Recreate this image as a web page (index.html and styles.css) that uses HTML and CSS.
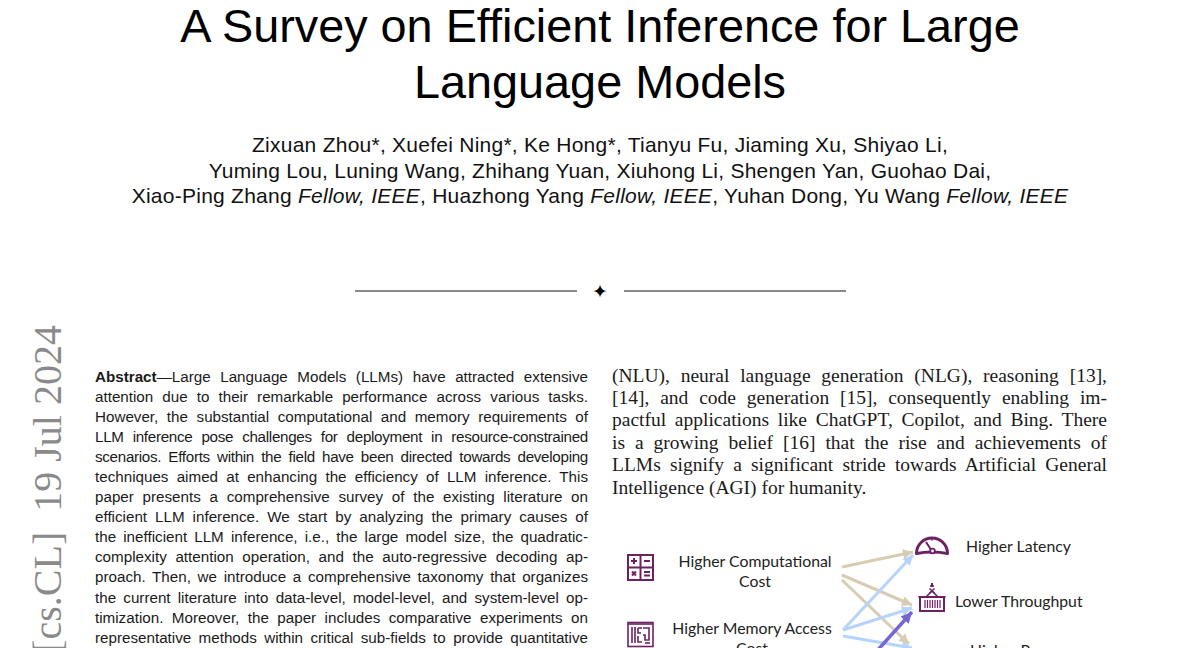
FILE: index.html
```html
<!DOCTYPE html>
<html lang="en">
<head>
<meta charset="utf-8">
<title>A Survey on Efficient Inference for Large Language Models</title>
<link rel="stylesheet" href="styles.css">
</head>
<body>
<div class="page">
  <div class="stamp">[cs.CL]&nbsp;&nbsp;19 Jul 2024</div>

  <h1 class="title">A Survey on Efficient Inference for Large<br>Language Models</h1>

  <p class="authors">Zixuan Zhou*, Xuefei Ning*, Ke Hong*, Tianyu Fu, Jiaming Xu, Shiyao Li,<br>Yuming Lou, Luning Wang, Zhihang Yuan, Xiuhong Li, Shengen Yan, Guohao Dai,<br>Xiao-Ping Zhang <i>Fellow, IEEE</i>, Huazhong Yang <i>Fellow, IEEE</i>, Yuhan Dong, Yu Wang <i>Fellow, IEEE</i></p>

  <div class="divider"><span class="rule"></span><span class="star">&#10022;</span><span class="rule"></span></div>

  <div class="columns">
    <div class="abstract">
      <span class="ln"><b>Abstract</b>—Large Language Models (LLMs) have attracted extensive</span>
      <span class="ln">attention due to their remarkable performance across various tasks.</span>
      <span class="ln">However, the substantial computational and memory requirements of</span>
      <span class="ln tight">LLM inference pose challenges for deployment in resource-constrained</span>
      <span class="ln tight">scenarios. Efforts within the field have been directed towards developing</span>
      <span class="ln">techniques aimed at enhancing the efficiency of LLM inference. This</span>
      <span class="ln">paper presents a comprehensive survey of the existing literature on</span>
      <span class="ln">efficient LLM inference. We start by analyzing the primary causes of</span>
      <span class="ln">the inefficient LLM inference, i.e., the large model size, the quadratic-</span>
      <span class="ln">complexity attention operation, and the auto-regressive decoding ap-</span>
      <span class="ln">proach. Then, we introduce a comprehensive taxonomy that organizes</span>
      <span class="ln">the current literature into data-level, model-level, and system-level op-</span>
      <span class="ln">timization. Moreover, the paper includes comparative experiments on</span>
      <span class="ln">representative methods within critical sub-fields to provide quantitative</span>
    </div>

    <div class="right">
      <div class="para">
        <span class="ln">(NLU), neural language generation (NLG), reasoning [13],</span>
        <span class="ln">[14], and code generation [15], consequently enabling im-</span>
        <span class="ln">pactful applications like ChatGPT, Copilot, and Bing. There</span>
        <span class="ln">is a growing belief [16] that the rise and achievements of</span>
        <span class="ln">LLMs signify a significant stride towards Artificial General</span>
        <span class="ln last">Intelligence (AGI) for humanity.</span>
      </div>

      <div class="figure">
        <svg class="arrows" width="495" height="200" viewBox="0 0 495 200">
          <defs>
            <marker id="mb" viewBox="0 0 10 10" refX="10" refY="5" markerWidth="11" markerHeight="10" markerUnits="userSpaceOnUse" orient="auto"><path d="M0 0 L10 5 L0 10 Z" fill="#d8cdb3"/></marker>
            <marker id="mc" viewBox="0 0 10 10" refX="10" refY="5" markerWidth="11" markerHeight="10" markerUnits="userSpaceOnUse" orient="auto"><path d="M0 0 L10 5 L0 10 Z" fill="#b6d4fb"/></marker>
            <marker id="mp" viewBox="0 0 10 10" refX="10" refY="5" markerWidth="12" markerHeight="11" markerUnits="userSpaceOnUse" orient="auto"><path d="M0 0 L10 5 L0 10 Z" fill="#7565d6"/></marker>
          </defs>
          <g stroke="#d8cdb3" stroke-width="3" fill="none" marker-end="url(#mb)">
            <line x1="230" y1="37" x2="301" y2="22"/>
            <line x1="230" y1="45" x2="300" y2="75"/>
            <line x1="230" y1="50" x2="297" y2="114"/>
          </g>
          <g stroke="#b6d4fb" stroke-width="3" fill="none" marker-end="url(#mc)">
            <line x1="231" y1="100" x2="301" y2="25"/>
            <line x1="231" y1="100" x2="300" y2="78"/>
            <line x1="231" y1="106" x2="300" y2="118"/>
          </g>
          <line x1="264" y1="122" x2="300" y2="82" stroke="#7565d6" stroke-width="3.5" marker-end="url(#mp)"/>
        </svg>

        <svg class="icon calc" width="27" height="27" viewBox="0 0 27 27">
          <g stroke="#6d2163" stroke-width="2" fill="none">
            <rect x="1" y="1" width="25" height="25"/>
            <line x1="13.5" y1="1" x2="13.5" y2="26"/>
            <line x1="1" y1="13.5" x2="26" y2="13.5"/>
            <line x1="4" y1="7" x2="10" y2="7"/>
            <line x1="7" y1="4" x2="7" y2="10"/>
            <line x1="17" y1="7" x2="23" y2="7"/>
            <line x1="5" y1="17.5" x2="9" y2="21.5"/>
            <line x1="9" y1="17.5" x2="5" y2="21.5"/>
            <line x1="17" y1="18" x2="23" y2="18"/>
            <line x1="17" y1="21.5" x2="23" y2="21.5"/>
          </g>
        </svg>

        <svg class="icon mem" width="27" height="27" viewBox="0 0 27 27">
          <g stroke="#6d2163" stroke-width="1.6" fill="none">
            <rect x="1" y="1.5" width="25" height="24"/>
            <line x1="1" y1="3" x2="26" y2="3"/>
            <path d="M5 6 V22 M8 6 V22"/>
            <path d="M11 7 H15 M11 7 V12 H14 M11 15 V21 H15"/>
            <path d="M16 7 H22 V19 H18 V14 H16"/>
            <path d="M18 22 H23"/>
          </g>
        </svg>

        <svg class="icon gauge" width="36" height="22" viewBox="0 0 36 22">
          <g stroke="#6d2163" fill="none">
            <path d="M2.5 19.5 A15.5 15.5 0 0 1 33.5 19.5 Q18 16.5 2.5 19.5 Z" stroke-width="3" stroke-linejoin="round"/>
            <line x1="18" y1="4" x2="18" y2="6.5" stroke-width="1.5"/>
            <line x1="17.5" y1="16.5" x2="12" y2="8" stroke-width="2"/>
            <circle cx="18.5" cy="17" r="2.3" stroke-width="1.8" fill="#fff"/>
          </g>
        </svg>

        <svg class="icon crate" width="28" height="30" viewBox="0 0 28 30">
          <g stroke="#6d2163" fill="none">
            <line x1="14" y1="0" x2="14" y2="4" stroke-width="2"/>
            <path d="M12 3 H16" stroke-width="1.6"/>
            <path d="M11.5 5.5 L16.5 10 M16.5 5.5 L11.5 10" stroke-width="1.5"/>
            <path d="M14 8 L8 14 M14 8 L20 14" stroke-width="1.6"/>
            <rect x="2" y="14" width="24" height="14" stroke-width="2"/>
            <line x1="0.5" y1="14" x2="27.5" y2="14" stroke-width="2"/>
            <path d="M7 17 V25 M9.5 17 V25 M12 17 V25 M14.5 17 V25 M17 17 V25 M19.5 17 V25 M22 17 V25" stroke-width="1.2"/>
          </g>
        </svg>

        <div class="node cause c1">Higher Computational<br>Cost</div>
        <div class="node cause c2">Higher Memory Access<br>Cost</div>
        <div class="node effect e1">Higher Latency</div>
        <div class="node effect e2">Lower Throughput</div>
        <div class="node effect e3">Higher Power</div>
      </div>
    </div>
  </div>
</div>
</body>
</html>
```

FILE: styles.css
```css
html, body {
  margin: 0;
  padding: 0;
  background: #ffffff;
}

body {
  overflow: hidden;
}

.page {
  position: relative;
  width: 1200px;
  height: 648px;
  overflow: hidden;
  color: #111;
}

.stamp {
  position: absolute;
  top: 325px;
  left: 28px;
  writing-mode: vertical-rl;
  transform: rotate(180deg);
  font-family: "Liberation Serif", "Times New Roman", serif;
  font-size: 40px;
  line-height: 40px;
  color: #8a8a8a;
  white-space: nowrap;
}

.title {
  margin: -2px 0 0;
  font-family: "Liberation Sans", Arial, sans-serif;
  font-weight: normal;
  font-size: 46.8px;
  line-height: 56px;
  text-align: center;
  color: #000;
}

.authors {
  margin: 22px 0 0;
  font-family: "Liberation Sans", Arial, sans-serif;
  font-size: 21px;
  line-height: 25.5px;
  letter-spacing: 0.25px;
  text-align: center;
  color: #111;
}

.divider {
  margin-top: 72px;
  height: 20px;
  display: flex;
  justify-content: center;
  align-items: center;
}

.rule {
  width: 222px;
  height: 2px;
  background: #8a8a8a;
}

.star {
  width: 47px;
  text-align: center;
  font-family: "DejaVu Sans", sans-serif;
  font-size: 19px;
  line-height: 20px;
  color: #000;
}

.columns {
  margin-top: 61px;
  padding-left: 95px;
  display: grid;
  grid-template-columns: 493px 495px;
  column-gap: 24px;
  align-items: start;
}

.ln {
  display: block;
  text-align: justify;
  text-align-last: justify;
}

.ln.last {
  text-align-last: left;
}

.abstract {
  padding-top: 5px;
  font-family: "Liberation Sans", Arial, sans-serif;
  font-size: 15.2px;
  line-height: 20.1px;
  color: #1a1a1a;
}

.abstract b {
  font-weight: bold;
}

.tight {
  letter-spacing: -0.3px;
}

.para {
  padding-top: 3px;
  font-family: "Liberation Serif", "Times New Roman", serif;
  font-size: 19.5px;
  line-height: 22.4px;
  color: #1a1a1a;
}

.figure {
  position: relative;
  margin-top: 31px;
  height: 200px;
}

.arrows {
  position: absolute;
  left: 0;
  top: 0;
}

.icon {
  position: absolute;
  display: block;
}

.calc { left: 15px; top: 24px; }
.mem { left: 15px; top: 91px; }
.gauge { left: 302px; top: 4px; }
.crate { left: 306px; top: 53px; }

.node {
  position: absolute;
  font-family: Lato, "Open Sans", sans-serif;
  font-size: 15.8px;
  line-height: 20px;
  color: #222;
  white-space: nowrap;
}

.cause {
  width: 180px;
  text-align: center;
}

.c1 { left: 53px; top: 21px; }
.c2 { left: 50px; top: 88px; }
.e1 { left: 354px; top: 6px; }
.e2 { left: 343px; top: 61px; }
.e3 { left: 358px; top: 110px; }
```
